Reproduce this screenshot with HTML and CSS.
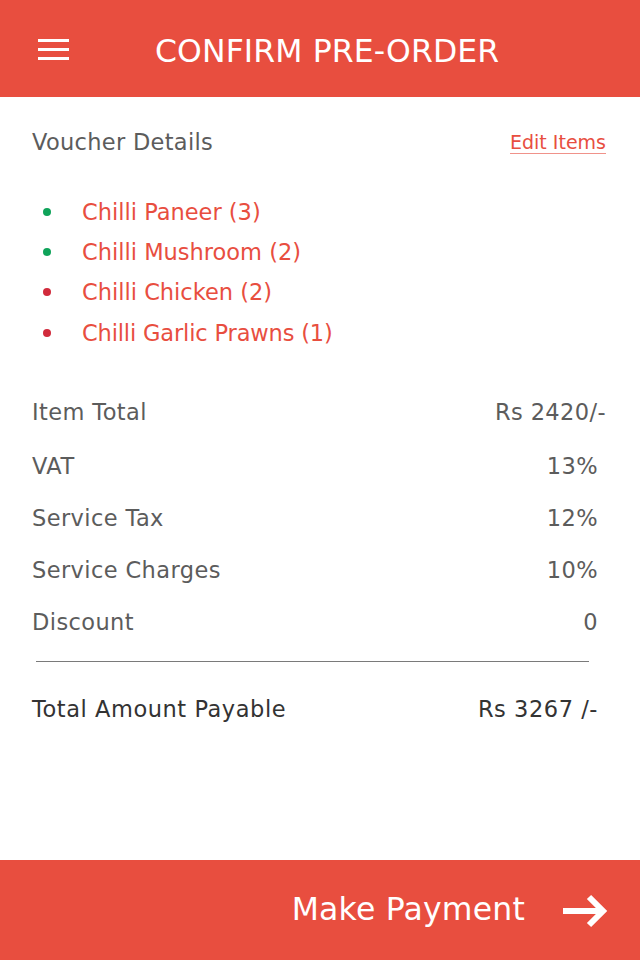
FILE: index.html
```html
<!DOCTYPE html>
<html lang="en">
<head>
<meta charset="utf-8">
<title>Confirm Pre-Order</title>
<link rel="stylesheet" href="styles.css">
</head>
<body>
<div class="page">
  <header class="topbar">
    <button class="menu" aria-label="Menu">
      <span></span><span></span><span></span>
    </button>
    <h1 class="title">CONFIRM PRE-ORDER</h1>
  </header>

  <main class="content">
    <div class="voucher-head">
      <span class="voucher-title">Voucher Details</span>
      <a class="edit-link" href="#">Edit Items</a>
    </div>

    <ul class="items">
      <li class="item"><span class="dot veg"></span>Chilli Paneer (3)</li>
      <li class="item"><span class="dot veg"></span>Chilli Mushroom (2)</li>
      <li class="item"><span class="dot nonveg"></span>Chilli Chicken (2)</li>
      <li class="item last"><span class="dot nonveg"></span>Chilli Garlic Prawns (1)</li>
    </ul>

    <div class="summary">
      <div class="row"><span>Item Total</span><span>Rs 2420/-</span></div>
      <div class="row inset"><span>VAT</span><span>13%</span></div>
      <div class="row inset"><span>Service Tax</span><span>12%</span></div>
      <div class="row inset"><span>Service Charges</span><span>10%</span></div>
      <div class="row inset"><span>Discount</span><span>0</span></div>
    </div>

    <hr class="divider">

    <div class="row inset total"><span>Total Amount Payable</span><span>Rs 3267 /-</span></div>
  </main>

  <footer class="pay-bar">
    <span class="pay-label">Make Payment</span>
    <svg class="pay-arrow" width="46" height="34" viewBox="0 0 46 34" aria-hidden="true">
      <path d="M0 17 H41 M26 3 L40 17 L26 31" fill="none" stroke="#ffffff" stroke-width="6" stroke-linejoin="miter" stroke-miterlimit="10"/>
    </svg>
  </footer>
</div>
</body>
</html>
```

FILE: styles.css
```css
* {
  box-sizing: border-box;
}

html, body {
  margin: 0;
  padding: 0;
  background: #ffffff;
}

body {
  font-family: "DejaVu Sans", "Liberation Sans", sans-serif;
  font-size: 22.5px;
  color: #5c5c5c;
}

.page {
  width: 640px;
  height: 960px;
  display: flex;
  flex-direction: column;
}

.topbar {
  height: 97px;
  flex: 0 0 97px;
  background: #e84e3f;
  display: flex;
  align-items: center;
  padding-left: 38px;
}

.menu {
  width: 31px;
  height: 21px;
  padding: 0;
  border: 0;
  background: transparent;
  display: flex;
  flex-direction: column;
  justify-content: space-between;
  margin-top: 1px;
}

.menu span {
  display: block;
  height: 3px;
  width: 31px;
  background: #ffffff;
}

.title {
  margin: 4px 0 0 86px;
  font-size: 31.5px;
  font-weight: normal;
  color: #ffffff;
  line-height: 40px;
  letter-spacing: 0.1px;
}

.content {
  flex: 1 1 auto;
  padding: 0 34px 0 32px;
}

.voucher-head {
  margin-top: 30px;
  height: 30px;
  display: flex;
  justify-content: space-between;
  align-items: center;
}

.voucher-title {
  color: #5c5c5c;
  letter-spacing: 0.3px;
}

.edit-link {
  font-size: 19px;
  color: #e84e3f;
  text-decoration: underline;
  text-decoration-color: #f0928a;
  text-underline-offset: 4px;
}

.items {
  list-style: none;
  margin: 35px 0 0 0;
  padding: 0;
}

.item {
  height: 40px;
  line-height: 40px;
  display: flex;
  align-items: center;
  color: #e84e3f;
}

.item.last {
  margin-top: 1px;
  letter-spacing: -0.15px;
}

.dot {
  width: 8px;
  height: 8px;
  border-radius: 50%;
  margin-left: 11px;
  margin-right: 31px;
  flex: 0 0 8px;
}

.dot.veg {
  background: #0fa35a;
}

.dot.nonveg {
  background: #d12b3c;
}

.summary {
  margin-top: 33px;
}

.row {
  height: 52px;
  display: flex;
  justify-content: space-between;
  align-items: center;
  color: #5c5c5c;
  letter-spacing: 0.4px;
}

.row.inset {
  padding-right: 8px;
}

.summary .row.inset {
  padding-top: 3px;
}

.divider {
  border: 0;
  height: 1px;
  background: #7a7a7a;
  margin: 15px 17px 0 4px;
}

.total {
  margin-top: 21px;
  color: #333333;
  letter-spacing: 0.55px;
}

.pay-bar {
  height: 100px;
  flex: 0 0 100px;
  background: #e84e3f;
  display: flex;
  justify-content: flex-end;
  align-items: center;
  padding-right: 31px;
}

.pay-label {
  font-size: 31.5px;
  color: #ffffff;
  margin-right: 38px;
  margin-top: -2px;
  letter-spacing: 0.2px;
}

.pay-arrow {
  display: block;
  margin-top: 2px;
}
```
